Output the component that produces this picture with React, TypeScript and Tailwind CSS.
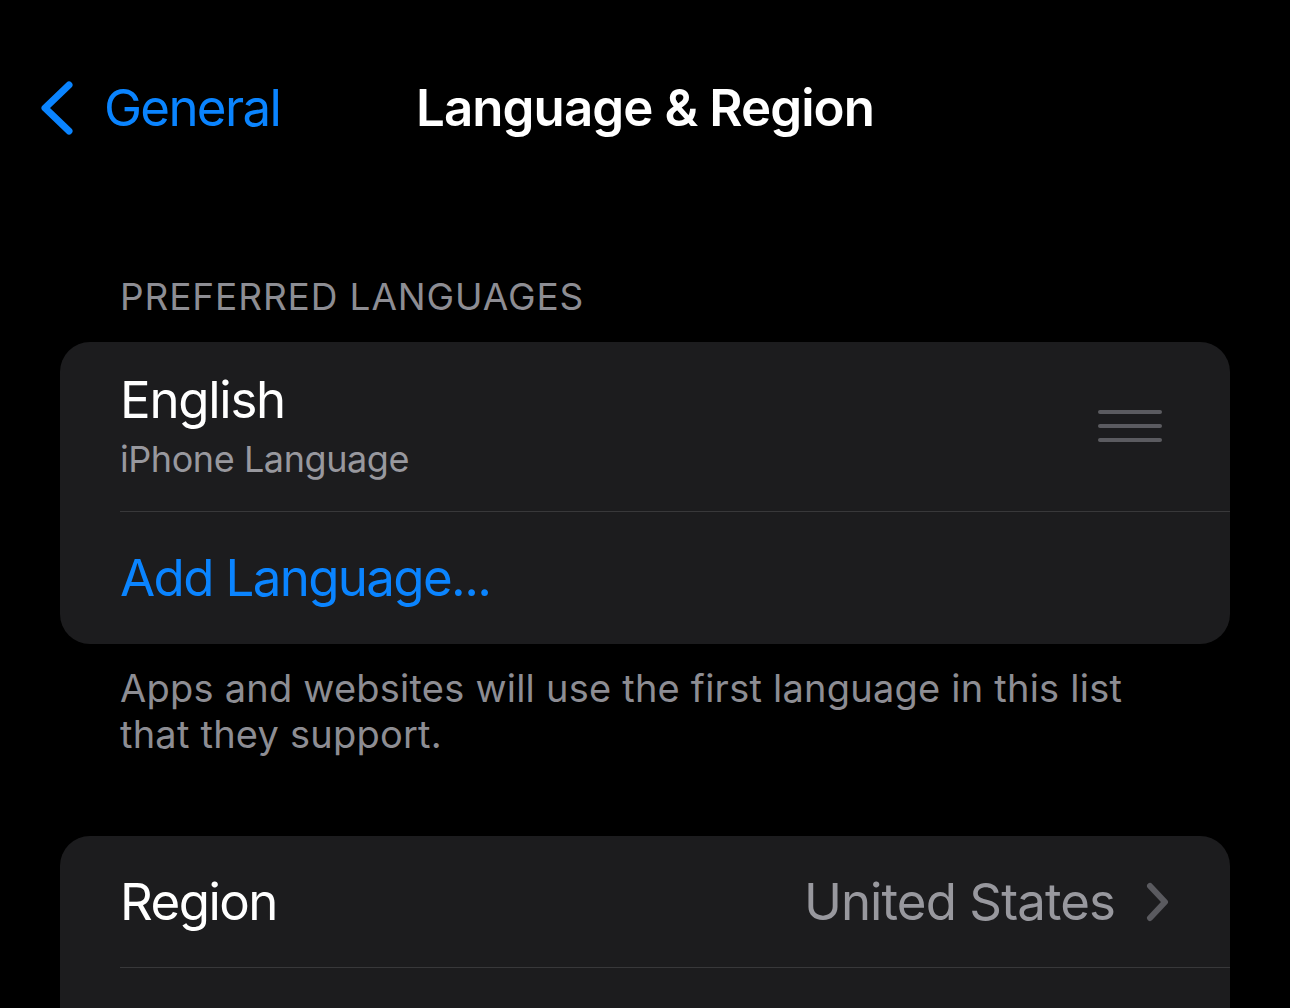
import React from "react";

export default function App() {
  return (
    <div className="w-[1290px] h-[1008px] bg-black overflow-hidden font-['Inter',sans-serif] text-white">
      {/* Nav bar */}
      <div className="relative pt-[78px] h-[138px] flex items-start">
        <div className="flex items-center h-[60px] pl-[40px] gap-[30px]">
          <svg width="34" height="54" viewBox="0 0 34 54" className="block">
            <path d="M29 4 L5 27 L29 50" fill="none" stroke="#0a84ff" strokeWidth="7" strokeLinecap="round" strokeLinejoin="round" />
          </svg>
          <span className="text-[51px] leading-[60px] tracking-[-0.033em] text-[#0a84ff]">General</span>
        </div>
        <div className="absolute left-0 right-0 top-[78px] h-[60px] flex justify-center">
          <span className="text-[51px] leading-[60px] font-semibold tracking-[-0.018em]">Language &amp; Region</span>
        </div>
      </div>

      {/* Header */}
      <div className="mt-[137px] px-[120px] text-[37px] leading-[44px] text-[#8d8d93] tracking-[0.024em]">
        PREFERRED LANGUAGES
      </div>

      {/* Card 1 */}
      <div className="mt-[23px] mx-[60px] bg-[#1c1c1e] rounded-[30px] overflow-hidden">
        <div className="pl-[60px] flex items-center h-[169px]">
          <div className="flex-1 flex flex-col mt-[-2px]">
            <span className="text-[51px] leading-[60px] tracking-[-0.025em]">English</span>
            <span className="mt-[7px] text-[36px] leading-[44px] tracking-[-0.012em] text-[#98989e]">iPhone Language</span>
          </div>
          <div className="w-[64px] mr-[68px] flex flex-col gap-[10px] mt-[-1px]">
            <div className="h-[4px] rounded-full bg-[#5b5b60]" />
            <div className="h-[4px] rounded-full bg-[#5b5b60]" />
            <div className="h-[4px] rounded-full bg-[#5b5b60]" />
          </div>
        </div>
        <div className="ml-[60px] h-px bg-[#38383a]" />
        <div className="pl-[60px] h-[132px] flex items-center">
          <span className="text-[51px] leading-[60px] tracking-[-0.032em] text-[#0a84ff]">Add Language...</span>
        </div>
      </div>

      {/* Footer */}
      <div className="pt-[21px] pl-[120px] pr-[140px] text-[38px] leading-[46px] tracking-[0.006em] text-[#8d8d93]">
        Apps and websites will use the first language in this list that they support.
      </div>

      {/* Card 2 */}
      <div className="mt-[79px] mx-[60px] bg-[#1c1c1e] rounded-t-[30px] h-[300px]">
        <div className="pl-[60px] pr-[60px] h-[131px] flex items-center">
          <span className="flex-1 text-[51px] leading-[60px] tracking-[-0.03em]">Region</span>
          <span className="text-[51px] leading-[60px] tracking-[-0.018em] text-[#98989e]">United States</span>
          <svg width="24" height="40" viewBox="0 0 24 40" className="ml-[31px] block">
            <path d="M4 4 L19 20 L4 36" fill="none" stroke="#5a5a5f" strokeWidth="6" strokeLinecap="round" strokeLinejoin="round" />
          </svg>
        </div>
        <div className="ml-[60px] h-px bg-[#38383a]" />
      </div>
    </div>
  );
}
